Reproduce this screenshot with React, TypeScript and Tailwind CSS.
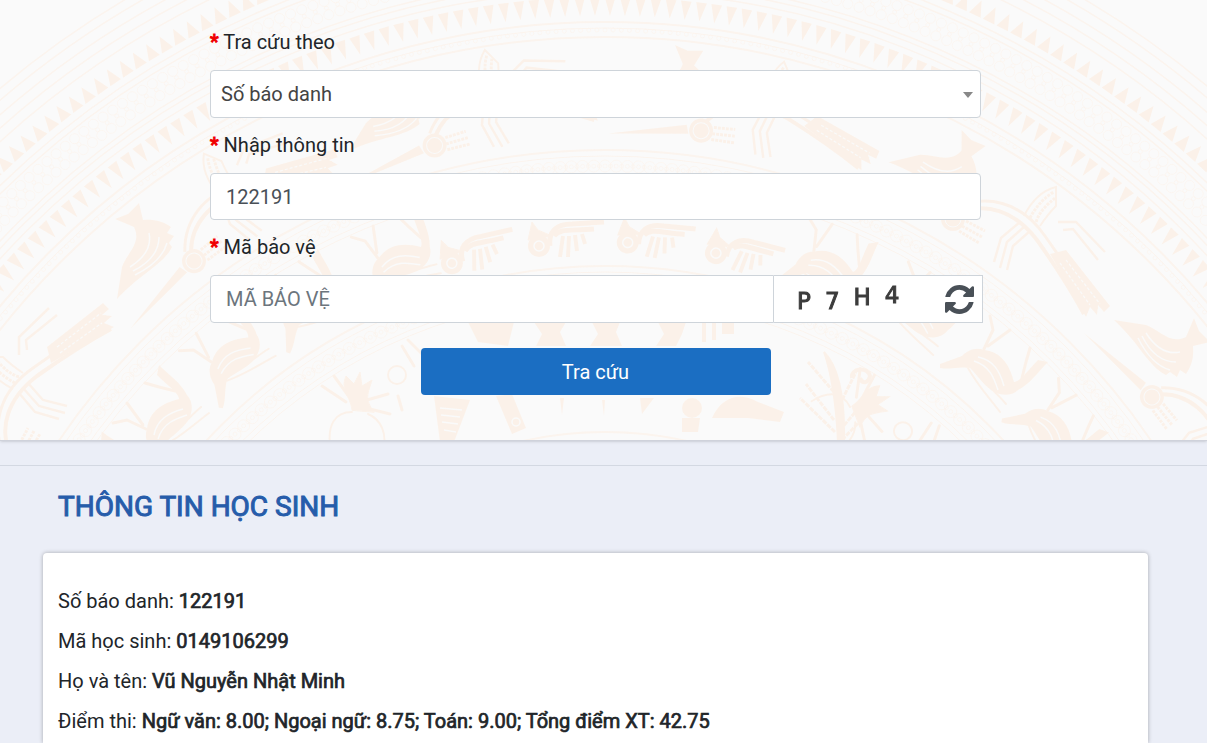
import type { ReactNode } from "react";

const CX = 605;
const CY = 808;

function polar(radius: number, degrees: number) {
  const a = (degrees * Math.PI) / 180;
  return [CX + radius * Math.sin(a), CY - radius * Math.cos(a)];
}

function teeth(base: number, tip: number, step: number, halfWidth: number) {
  let d = "";
  for (let a = -72; a <= 72; a += step) {
    const [x1, y1] = polar(base, a - halfWidth);
    const [x2, y2] = polar(base, a + halfWidth);
    const [x3, y3] = polar(tip, a);
    d += `M${x1.toFixed(1)} ${y1.toFixed(1)}L${x2.toFixed(1)} ${y2.toFixed(1)}L${x3.toFixed(1)} ${y3.toFixed(1)}Z`;
  }
  return d;
}

function beads(radius: number, size: number, step: number) {
  let d = "";
  for (let a = -72; a <= 72; a += step) {
    const [x, y] = polar(radius, a);
    d += `M${(x - size).toFixed(1)} ${y.toFixed(1)}a${size} ${size} 0 1 0 ${size * 2} 0a${size} ${size} 0 1 0 ${-size * 2} 0`;
  }
  return d;
}

function Around({ angles, children }: { angles: number[]; children: ReactNode }) {
  return (
    <>
      {angles.map((angle) => (
        <g key={angle} transform={`rotate(${angle} ${CX} ${CY})`}>
          {children}
        </g>
      ))}
    </>
  );
}

function Heron() {
  return (
    <g>
      <path d="M866 186L942 208L940 217Z" fill="#fcefe4" />
      <circle cx="953" cy="219" r="12" fill="#fcefe4" />
      <circle cx="953" cy="219" r="8" fill="none" stroke="#fafafa" strokeWidth="1" />
      <path d="M958 207C985 195 1020 200 1045 236C1065 265 1080 285 1097 309" fill="none" stroke="#fcefe4" strokeWidth="3" />
      <path d="M960 213C985 202 1014 210 1037 240C1057 268 1070 288 1084 314" fill="none" stroke="#fcefe4" strokeWidth="4" />
      <path d="M1050 254L1066 250L1110 306L1104 312L1098 305L1097 315L1090 307L1086 317Z" fill="#fcefe4" />
      <path d="M1060 263L1090 305M1066 260L1100 304" stroke="#fafafa" strokeWidth="1.2" strokeDasharray="3 2" />
      <path d="M962 226L982 237M959 231L979 243M966 221L985 231" stroke="#fcefe4" strokeWidth="3" strokeDasharray="3 1" />
      <path d="M1020 222L1001 238L994 262M1025 226L1007 242L1000 268M1030 231L1013 246L1007 270" fill="none" stroke="#fcefe4" strokeWidth="2.5" />
      <path d="M1024 216C1032 200 1044 190 1056 187L1056 206C1048 214 1044 220 1040 226" fill="none" stroke="#fcefe4" strokeWidth="2" />
      <path d="M1030 218C1036 206 1046 196 1054 192M1036 222C1040 210 1048 204 1055 198" fill="none" stroke="#fcefe4" strokeWidth="3" strokeDasharray="3 1" />
      <path d="M1058 222L1076 222L1105 252M1063 230L1073 229L1098 260" fill="none" stroke="#fcefe4" strokeWidth="2.5" />
    </g>
  );
}

function Fowl() {
  return (
    <g>
      <path
        d="M1114 320L1146 325C1160 330 1170 345 1186 337L1194 318L1199 331L1210 342L1193 346C1194 356 1192 366 1186 374L1180 370L1177 377L1170 372L1166 375C1148 366 1140 344 1114 320Z"
        fill="#fcefe4"
      />
      <path
        d="M1142 336C1150 352 1160 362 1176 362M1146 333C1155 347 1166 355 1180 352M1138 338C1146 354 1156 366 1170 370"
        fill="none"
        stroke="#fafafa"
        strokeWidth="1.5"
      />
    </g>
  );
}

function Deer() {
  return (
    <g>
      <path
        d="M940 364L962 356C968 350 976 347 984 350C1002 352 1010 366 1014 382C1020 382 1028 370 1038 360L1048 362C1038 372 1030 384 1018 390C1012 396 1002 396 994 392C984 386 978 376 970 368C960 366 950 370 940 368Z"
        fill="#fcefe4"
      />
      <path
        d="M978 357C994 360 1000 372 1004 386M974 361C990 366 994 378 998 390"
        fill="none"
        stroke="#fafafa"
        strokeWidth="1.5"
      />
      <g fill="none" stroke="#fcefe4" strokeWidth="3" strokeLinecap="round">
        <path d="M984 349L993 330L990 316M988 346L1010 330" />
        <path d="M1022 378L1026 362L1030 348" />
        <path d="M968 368C978 386 988 396 1000 412M974 366C984 384 996 392 1006 404" strokeWidth="2" />
      </g>
    </g>
  );
}

function SmallBird() {
  return (
    <g fill="none" stroke="#fcefe4">
      <path d="M528 240L532 222L538 230L552 236Z" fill="#fcefe4" />
      <circle cx="539" cy="246" r="11" fill="#fcefe4" stroke="none" />
      <circle cx="539" cy="246" r="5" stroke="#fafafa" strokeWidth="1.5" />
      <path d="M550 246C548 232 556 224 572 224L604 222M554 236C560 228 570 231 594 229" strokeWidth="5" />
      <path d="M563 236L560 257M569 236L568 257M575 235L577 251M582 234L585 244" strokeWidth="4" />
    </g>
  );
}

function Dancer() {
  return (
    <g fill="none" stroke="#fcefe4" strokeLinecap="round">
      <path d="M352 410C350 395 340 390 346 376L354 384L360 372L362 386L372 380C368 394 364 398 374 412Z" fill="#fcefe4" strokeWidth="1" />
      <path d="M346 402L322 386M350 398L334 376M360 402L388 394M366 408L390 414" strokeWidth="3" />
      <path d="M352 412C334 412 328 426 330 444M368 414C382 420 386 434 384 446" strokeWidth="2" />
      <circle cx="397" cy="375" r="9" strokeWidth="2" />
      <path d="M402 346L414 366M408 340L424 356M398 396L402 410" strokeWidth="3" />
    </g>
  );
}

function Plume() {
  return (
    <g fill="none" stroke="#fcefe4">
      <path d="M838 442C836 400 832 375 824 352C840 368 845 400 844 442Z" fill="#fcefe4" strokeWidth="2" />
      <path d="M840 430L876 388M842 440L882 398M834 420L806 384M835 432L800 398M842 400L856 372M834 392L808 362" strokeWidth="3" strokeDasharray="5 1" />
      <path d="M852 378C850 368 868 366 870 376C868 384 862 384 860 378" strokeWidth="4" />
    </g>
  );
}

function Hut() {
  return (
    <g fill="#fcefe4">
      <path d="M434 396L470 400L454 442L440 442Z" />
      <path d="M496 396L512 394L526 428L512 434Z" />
      <path d="M468 322L514 322L508 346L478 342Z" />
      <path d="M440 408L462 410M441 415L460 417M442 422L458 424M444 430L456 432" stroke="#fafafa" strokeWidth="1.5" />
      <circle cx="516" cy="422" r="4" fill="none" stroke="#fafafa" strokeWidth="1.5" />
    </g>
  );
}

function DrumPattern() {
  const fine = [940, 931, 920, 910, 900, 868, 862, 829, 824, 817];
  const strong = [786, 771, 658, 542, 376];
  const faint = [780, 652, 632, 627, 536, 516, 511];
  return (
    <svg
      aria-hidden="true"
      className="absolute inset-0 h-full w-full opacity-75"
      viewBox="0 0 1207 440"
      preserveAspectRatio="xMidYMax slice"
    >
      <g fill="none" stroke="#fcf2ea">
        {fine.map((r) => (
          <circle key={r} cx={CX} cy={CY} r={r} strokeWidth="1.5" />
        ))}
        {strong.map((r) => (
          <circle key={r} cx={CX} cy={CY} r={r} strokeWidth="2" />
        ))}
        {faint.map((r) => (
          <circle key={r} cx={CX} cy={CY} r={r} strokeWidth="1" />
        ))}
        <g strokeWidth="0.7">
          <path d={beads(854, 5, 0.8)} />
          <path d={beads(840, 5, 0.8)} />
          <path d={beads(847, 2, 0.8)} />
          <path d={beads(778, 2, 0.6)} />
          <path d={beads(642, 6, 1)} />
          <path d={beads(642, 2, 0.5)} />
          <path d={beads(526, 6, 1.3)} />
          <path d={beads(526, 2, 0.65)} />
        </g>
      </g>
      <path d={teeth(875, 891, 1, 0.42)} fill="#fcefe4" />
      <path d={teeth(811, 792, 1.08, 0.38)} fill="#fcefe4" />
      <Around angles={[-90, -67.5, -45, -22.5, 0, 22.5]}>
        <Heron />
      </Around>
      <Around angles={[-90, -67.5, -45, -22.5, 0]}>
        <Fowl />
      </Around>
      <Around angles={[-98, -90, -81, -72, -62, -19, -9, 0, 8.5]}>
        <Deer />
      </Around>
      <Around angles={[-9, 0, 9, 18]}>
        <SmallBird />
      </Around>
      <Around angles={[0, 64]}>
        <Dancer />
      </Around>
      <Plume />
      <Hut />
      <g fill="#fcefe4">
        <path d="M534 322H566L560 332L566 346H536L542 334Z" />
        <path d="M592 322H620L616 332L622 346H590L598 334Z" />
        <path d="M658 322H686L682 334L676 346H656L664 334Z" />
        <path d="M702 322H706V342H702ZM712 322H716V340H712ZM722 322H734V334H722Z" />
        <path d="M712 418C722 396 740 392 758 402L784 412L780 422L748 418Z" />
        <circle cx="692" cy="408" r="10" />
        <path d="M682 418H700L698 432H682Z" />
        <path d="M560 398L564 398L562 415ZM602 400L605 400L604 416ZM640 398L654 398L642 414Z" />
      </g>
    </svg>
  );
}

function RefreshIcon() {
  return (
    <svg aria-hidden="true" viewBox="0 0 1536 1536" className="h-[29px] w-[29px]" fill="currentColor">
      <path d="M1511 928q0 5-1 7-64 268-268 434.500T764 1536q-146 0-282.500-55T238 1324l-129 129q-19 19-45 19t-45-19-19-45V960q0-26 19-45t45-19h448q26 0 45 19t19 45-19 45l-137 137q71 66 161 102t187 36q134 0 250-65t186-179q11-17 53-117 8-23 30-23h192q13 0 22.500 9.500t9.500 22.500zm25-800v448q0 26-19 45t-45 19h-448q-26 0-45-19t-19-45 19-45l138-138Q969 256 768 256q-134 0-250 65T332 500q-11 17-53 117-8 23-30 23H50q-13 0-22.500-9.500T18 608v-7q65-268 270-434.500T768 0q146 0 284 55.500T1297 212l130-129q19-19 45-19t45 19 19 45z" />
    </svg>
  );
}

function FieldLabel({ htmlFor, children }: { htmlFor: string; children: ReactNode }) {
  return (
    <label htmlFor={htmlFor} className="mb-[13px] block text-[20px] leading-[30px] text-[#212529]">
      <span className="text-[#f00000] [-webkit-text-stroke:1px]">*</span> {children}
    </label>
  );
}

function SearchForm() {
  return (
    <form
      className="relative mx-auto flex w-full max-w-[771px] flex-col gap-3"
      onSubmit={(event) => event.preventDefault()}
    >
      <div>
        <FieldLabel htmlFor="kind">Tra cứu theo</FieldLabel>
        <div className="relative">
          <select
            id="kind"
            defaultValue="sbd"
            className="block h-12 w-full appearance-none rounded border border-[#ced4da] bg-white px-2.5 text-[20px] text-[#444444]"
          >
            <option value="sbd">Số báo danh</option>
            <option value="mhs">Mã học sinh</option>
          </select>
          <svg
            aria-hidden="true"
            viewBox="0 0 10 6"
            className="pointer-events-none absolute top-[22px] right-2 h-1.5 w-2.5"
          >
            <path d="M0 0H10L5 6Z" fill="#888888" />
          </svg>
        </div>
      </div>
      <div>
        <FieldLabel htmlFor="info">Nhập thông tin</FieldLabel>
        <input
          id="info"
          type="text"
          defaultValue="122191"
          className="block h-[47px] w-full rounded border border-[#ced4da] bg-white px-[15px] text-[20px] text-[#495057]"
        />
      </div>
      <div>
        <FieldLabel htmlFor="code">Mã bảo vệ</FieldLabel>
        <div className="-mr-0.5 flex h-12">
          <input
            id="code"
            type="text"
            placeholder="MÃ BẢO VỆ"
            className="min-w-0 flex-1 rounded-l border border-[#ced4da] bg-white px-[15px] text-[20px] text-[#495057] placeholder:text-[#6c757d]"
          />
          <div className="flex w-[209px] items-center justify-between border-y border-r border-[#ced4da] bg-white pr-2 pl-[23px]">
            <div className="flex items-end gap-3.5 pb-0.5 font-['DejaVu_Sans',sans-serif] text-[23px] leading-6 text-[#3c3c3c] blur-[0.6px] [-webkit-text-stroke:1px]">
              <span>P</span>
              <span>7</span>
              <span className="pb-1">H</span>
              <span className="pb-1.5">4</span>
            </div>
            <button type="button" aria-label="Đổi mã bảo vệ" className="text-[#495057]">
              <RefreshIcon />
            </button>
          </div>
        </div>
      </div>
      <button
        type="submit"
        className="mx-auto mt-[13px] h-[47px] w-full max-w-[350px] rounded bg-[#1b6ec2] text-[20px] text-white"
      >
        Tra cứu
      </button>
    </form>
  );
}

const rows = [
  { label: "Số báo danh", value: "122191" },
  { label: "Mã học sinh", value: "0149106299" },
  { label: "Họ và tên", value: "Vũ Nguyễn Nhật Minh" },
  { label: "Điểm thi", value: "Ngữ văn: 8.00; Ngoại ngữ: 8.75; Toán: 9.00; Tổng điểm XT: 42.75" },
];

export default function App() {
  return (
    <main className="flex min-h-screen flex-col bg-[#ebeef7] font-['Roboto',sans-serif]">
      <section className="relative overflow-hidden border-b border-[#cfd2db] bg-[#fafafa] pt-[27px] pr-4 pb-[45px] shadow-sm">
        <DrumPattern />
        <SearchForm />
      </section>
      <section className="mt-6 flex flex-1 flex-col border-t border-[#d3d8e2] pr-4">
        <div className="flex flex-1 flex-col px-[43px] pt-5">
          <h2 className="px-[15px] text-[28px] leading-[42px] font-normal text-[#265caa] [-webkit-text-stroke:1px]">
            THÔNG TIN HỌC SINH
          </h2>
          <dl className="mt-[25px] flex-1 rounded-t bg-white px-[15px] pt-7 text-[20px] leading-10 text-[#212529] shadow-[0_0_4px_rgba(0,0,0,0.3)]">
            {rows.map((row) => (
              <div key={row.label} className="flex flex-wrap gap-x-[5px]">
                <dt>{row.label}:</dt>
                <dd className="[-webkit-text-stroke:0.7px]">{row.value}</dd>
              </div>
            ))}
          </dl>
        </div>
      </section>
    </main>
  );
}
